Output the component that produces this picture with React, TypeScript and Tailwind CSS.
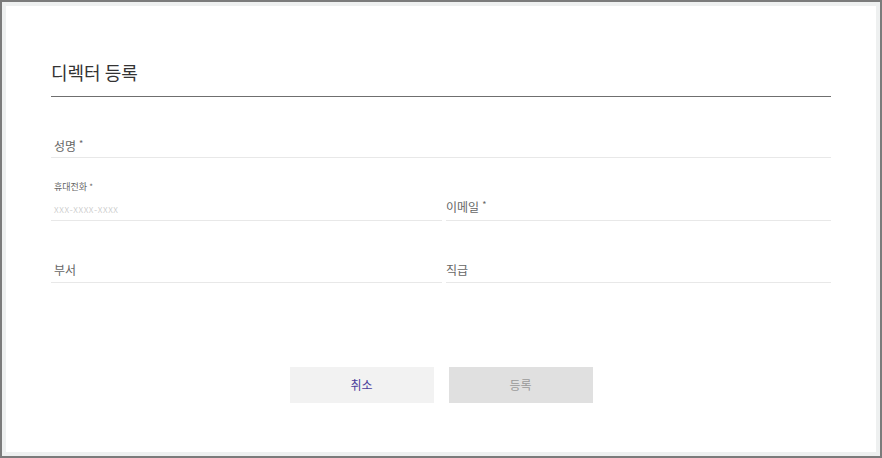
export default function App() {
    return (
        <div
            className="w-[882px] h-[458px] border-2 border-[#7b7b7b] bg-[#eef0f0] p-[4px] flex"
            style={{ fontFamily: '"Noto Sans CJK KR", "Noto Sans", sans-serif' }}
        >
            <div className="flex-1 bg-white px-[45px] pt-[53px] flex flex-col">
                {/* 제목 */}
                <h1 className="text-[18px] leading-[26px] text-[#333] pb-[11px] border-b-[1.5px] border-[#6f6f6f]">
                    디렉터 등록
                </h1>

                {/* 성명 */}
                <div className="mt-[37px] h-[24px] flex items-center px-[3px] border-b border-[#e8e8e8] text-[12px] text-[#666]">
                    성명<span className="text-[9px] ml-[3px] -mt-[4px]">*</span>
                </div>

                {/* 휴대전화 / 이메일 */}
                <div className="mt-[22px] flex gap-[4px]">
                    <div className="flex-1 border-b border-[#e8e8e8] px-[3px]">
                        <div className="text-[9px] leading-[14px] text-[#666]">
                            휴대전화<span className="ml-[2px] text-[8px]">*</span>
                        </div>
                        <div className="h-[26px] pt-[2px] flex items-center text-[10px] tracking-[0.6px] text-[#c4c4c4] font-light">
                            xxx-xxxx-xxxx
                        </div>
                    </div>
                    <div className="flex-1 border-b border-[#e8e8e8] flex items-end">
                        <div className="h-[26px] flex items-center text-[12px] text-[#666]">
                            이메일<span className="text-[9px] ml-[3px] -mt-[4px]">*</span>
                        </div>
                    </div>
                </div>

                {/* 부서 / 직급 */}
                <div className="mt-[36px] flex gap-[4px]">
                    <div className="flex-1 h-[26px] flex items-center border-b border-[#e8e8e8] px-[3px] text-[12px] text-[#666]">
                        부서
                    </div>
                    <div className="flex-1 h-[26px] flex items-center border-b border-[#e8e8e8] text-[12px] text-[#666]">
                        직급
                    </div>
                </div>

                {/* 버튼 */}
                <div className="mt-[84px] flex justify-center gap-[15px]">
                    <button className="w-[144px] h-[36px] bg-[#f2f2f2] text-[12px] text-[#4b3d9a]">
                        취소
                    </button>
                    <button className="w-[144px] h-[36px] bg-[#e0e0e0] text-[12px] text-[#9a9a9a]">
                        등록
                    </button>
                </div>
            </div>
        </div>
    );
}
